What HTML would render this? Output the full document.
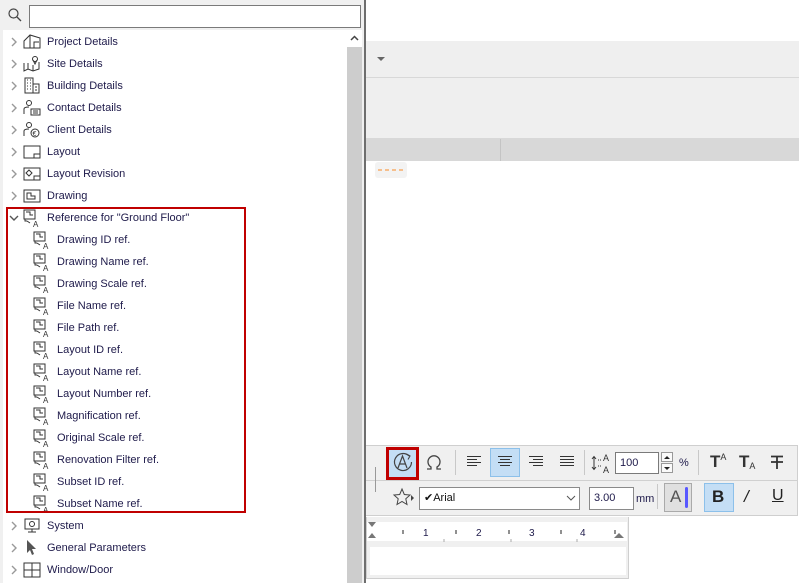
<!DOCTYPE html>
<html><head><meta charset="utf-8"><style>
*{margin:0;padding:0;box-sizing:border-box}
body{width:799px;height:583px;overflow:hidden;background:#fff;font-family:"Liberation Sans",Arial,sans-serif;font-size:11px;color:#1e1a4a;position:relative}
.a{position:absolute}
.row{position:absolute;height:22px;line-height:22px;white-space:nowrap}
svg{position:absolute;overflow:visible}
.tb{position:absolute;background:#f0f0f0}
</style></head><body>
<div class="a" style="left:366px;top:41px;width:433px;height:97px;background:#efefef"></div>
<div class="a" style="left:366px;top:77px;width:433px;height:1px;background:#d8d8d8"></div>
<div class="a" style="left:366px;top:138px;width:433px;height:23px;background:#d8d8d8"></div>
<div class="a" style="left:500px;top:139px;width:1px;height:22px;background:#c4c4c4"></div>
<svg style="left:377px;top:57px" width="8" height="5"><path d="M0 0H8L4 4Z" fill="#666"/></svg>
<div class="a" style="left:375px;top:162px;width:32px;height:16px;background:#f3f3f3;border-radius:3px"></div>
<svg style="left:378px;top:169px" width="28" height="3"><path d="M0 1H27" stroke="#f8a050" stroke-width="1.2" stroke-dasharray="4 3"/></svg>

<div class="a" style="left:0;top:0;width:365px;height:583px;background:#fff"></div>
<div class="a" style="left:0;top:0;width:365px;height:30px;background:#f0f0f0"></div>
<svg style="left:8px;top:8px" width="14" height="14"><circle cx="5.5" cy="5.5" r="4.5" fill="none" stroke="#444" stroke-width="1.2"/><path d="M9 9L13 13" stroke="#444" stroke-width="1.3"/></svg>
<div class="a" style="left:29px;top:5px;width:332px;height:23px;background:#fff;border:1px solid #7a7a7a"></div>
<div class="a" style="left:0;top:30px;width:3px;height:553px;background:#f0f0f0"></div>
<div class="a" style="left:347px;top:47px;width:15px;height:536px;background:#cdcdcd"></div>
<svg style="left:350px;top:35px" width="9" height="6"><path d="M1 5L4.5 1.5L8 5" fill="none" stroke="#444" stroke-width="1.5"/></svg>
<div class="a" style="left:362px;top:0;width:3px;height:583px;background:#f0f0f0"></div>
<div class="a" style="left:364px;top:0;width:2px;height:583px;background:#6e6e6e"></div>

<div id="tree"></div>

<div class="a" style="left:6px;top:207px;width:240px;height:306px;border:2.5px solid #c00000"></div>

<div class="tb" style="left:366px;top:445px;width:432px;height:71px;border-top:1px solid #cfcfcf;border-right:1px solid #cfcfcf;border-bottom:1px solid #cfcfcf"></div>
<div class="a" style="left:366px;top:480px;width:432px;height:1px;background:#d0d0d0"></div>
<div class="a" style="left:375px;top:467px;width:1px;height:25px;background:#999"></div>
<div class="a" style="left:386px;top:447px;width:33px;height:33px;background:#c4def5;border:3px solid #c00000"></div>
<svg style="left:392px;top:451px" width="22" height="22"><path d="M17 5A8.5 8.5 0 1 0 19.5 11" fill="none" stroke="#444" stroke-width="1.2"/><path d="M14.5 3L18 5L16 8.5" fill="none" stroke="#444" stroke-width="1.1"/><path d="M6 17L10.5 5L15 17M7.5 13H13.5" fill="none" stroke="#444" stroke-width="1.2"/></svg>
<svg style="left:425px;top:455px" width="18" height="16"><path d="M2 14H6V12A6 6 0 1 1 12 12V14H16" fill="none" stroke="#444" stroke-width="1.3"/></svg>
<div class="a" style="left:455px;top:450px;width:1px;height:25px;background:#c8c8c8"></div>
<div class="a" style="left:490px;top:448px;width:30px;height:29px;background:#c4def5;border:1px solid #8cc0ea"></div>
<svg style="left:467px;top:456px" width="110" height="12">
<g stroke="#333" stroke-width="1"><path d="M0 .5H14M0 3.5H10M0 6.5H14M0 9.5H10"/>
<path d="M31 .5H45M33 3.5H43M31 6.5H45M33 9.5H43"/>
<path d="M62 .5H76M66 3.5H76M62 6.5H76M66 9.5H76"/>
<path d="M93 .5H107M93 3.5H107M93 6.5H107M93 9.5H107"/></g></svg>
<div class="a" style="left:584px;top:450px;width:1px;height:25px;background:#c8c8c8"></div>
<svg style="left:590px;top:451px" width="24" height="24"><path d="M4 6V18M2 8L4 5.5L6 8M2 16L4 18.5L6 16" fill="none" stroke="#333"/><path d="M8 9H12M8 15H12" stroke="#333" stroke-dasharray="1 1"/><text x="13" y="10" font-size="9" fill="#333" font-family="Liberation Sans">A</text><text x="13" y="22" font-size="9" fill="#333" font-family="Liberation Sans">A</text></svg>
<div class="a" style="left:615px;top:452px;width:44px;height:22px;background:#fff;border:1px solid #7a7a7a;padding-left:4px;line-height:20px;font-size:11px">100</div>
<div class="a" style="left:661px;top:452px;width:12px;height:10px;border:1px solid #999;background:#fafafa"></div>
<div class="a" style="left:661px;top:463px;width:12px;height:10px;border:1px solid #999;background:#fafafa"></div>
<svg style="left:663px;top:454px" width="8" height="18"><path d="M1 5L4 2L7 5ZM1 13L4 16L7 13Z" fill="#222"/></svg>
<div class="a" style="left:679px;top:457px;font-size:11px">%</div>
<div class="a" style="left:698px;top:450px;width:1px;height:25px;background:#c8c8c8"></div>
<div class="a" style="left:710px;top:452px;font-size:17px;color:#333;font-weight:bold">T<span style="font-size:9px;vertical-align:7px;font-weight:normal">A</span></div>
<div class="a" style="left:739px;top:452px;font-size:17px;color:#333;font-weight:bold">T<span style="font-size:9px;vertical-align:-2px;font-weight:normal">A</span></div>
<svg style="left:770px;top:455px" width="14" height="15"><path d="M1 1.5H13M7 1.5V14M1 7H13" stroke="#333" stroke-width="1.8"/></svg>

<svg style="left:393px;top:488px" width="22" height="20"><path d="M9 1L11.3 6.5L17 7L12.8 10.8L14 16.5L9 13.5L4 16.5L5.2 10.8L1 7L6.7 6.5Z" fill="none" stroke="#444"/><path d="M18 7L21 10L18 13Z" fill="#444"/></svg>
<div class="a" style="left:419px;top:487px;width:161px;height:23px;background:#fff;border:1px solid #8a8a8a;line-height:21px;padding-left:4px;font-size:11px;color:#111">✔Arial</div>
<svg style="left:566px;top:495px" width="10" height="6"><path d="M1 1L5 5L9 1" fill="none" stroke="#555"/></svg>
<div class="a" style="left:589px;top:487px;width:45px;height:23px;background:#fff;border:1px solid #8a8a8a;line-height:21px;padding-left:4px">3.00</div>
<div class="a" style="left:636px;top:493px">mm</div>
<div class="a" style="left:657px;top:484px;width:1px;height:25px;background:#c8c8c8"></div>
<div class="a" style="left:664px;top:483px;width:28px;height:29px;background:#e0e0e0;border:1px solid #aaa"></div>
<div class="a" style="left:670px;top:487px;font-size:17px;color:#555">A</div>
<div class="a" style="left:685px;top:487px;width:3px;height:21px;background:#5858ff;border-radius:2px"></div>
<div class="a" style="left:704px;top:483px;width:30px;height:29px;background:#c4def5;border:1px solid #8cc0ea"></div>
<div class="a" style="left:712px;top:487px;font-size:17px;font-weight:bold;color:#222">B</div>
<div class="a" style="left:744px;top:487px;font-size:17px;font-style:italic;color:#222">/</div>
<div class="a" style="left:772px;top:487px;font-size:16px;color:#222;text-decoration:underline">U</div>

<div class="a" style="left:366px;top:517px;width:263px;height:62px;background:#f0f0f0;border:1px solid #cfcfcf;border-top:none"></div>
<div class="a" style="left:367px;top:522px;width:260px;height:19px;background:#fff"></div>
<div class="a" style="left:370px;top:547px;width:256px;height:28px;background:#fff"></div>
<svg style="left:366px;top:520px" width="262" height="30" font-family="Liberation Sans" font-size="10" fill="#1e1a4a">
<path d="M2 2H10L6 7ZM2 18H10L6 13Z" fill="#777"/><path d="M248 18H258L253 13Z" fill="#777"/>
<g stroke="#222"><path d="M37 10V14M90 10V14M143 10V14M195 10V14M249 10V14"/></g>
<g stroke="#aaa"><path d="M78 19V22M145 19V22M211 19V22"/></g>
<text x="57" y="16">1</text><text x="110" y="16">2</text><text x="163" y="16">3</text><text x="214" y="16">4</text>
</svg>

<script>
var items=[
["Project Details",0,'<path d="M1 8L7 2L17 5V15H1Z M7 2V15 M11 15V9H16" fill="none" stroke="#333"/>'],
["Site Details",0,'<path d="M1 8V16L5 14L10 16L16 14V7 M5 8V14 M10 10V16" fill="none" stroke="#333"/><circle cx="12" cy="4" r="2.5" fill="none" stroke="#333"/><path d="M10 5L12 9L14 5" fill="none" stroke="#333"/>'],
["Building Details",0,'<path d="M2 1H10V16H2Z M10 7H16V16H10Z" fill="none" stroke="#333"/><path d="M4 3H5M7 3H8M4 6H5M7 6H8M4 9H5M7 9H8M4 12H5M7 12H8M12 10H14M12 13H14" stroke="#333"/>'],
["Contact Details",0,'<circle cx="6" cy="4" r="2.5" fill="none" stroke="#333"/><path d="M1 15V10Q1 8 6 8 M8 10H17V16H8Z M10 12H15M10 14H15" fill="none" stroke="#333"/>'],
["Client Details",0,'<circle cx="6" cy="4" r="2.5" fill="none" stroke="#333"/><path d="M1 15V10Q1 8 6 8" fill="none" stroke="#333"/><circle cx="12" cy="12" r="4" fill="none" stroke="#333"/><text x="9.5" y="15" font-size="7" fill="#333">€</text>'],
["Layout",0,'<path d="M1 3H17V15H1Z M11 15V11H17" fill="none" stroke="#333"/>'],
["Layout Revision",0,'<path d="M1 3H17V15H1Z M11 15V11H17" fill="none" stroke="#333"/><path d="M3 8L6 5L9 8L6 11Z" fill="none" stroke="#333"/>'],
["Drawing",0,'<path d="M1 3H17V15H1Z M4 6H8V9H12V12H4Z" fill="none" stroke="#333"/>'],
['Reference for "Ground Floor"',0,'',1],
["Drawing ID ref.",1],["Drawing Name ref.",1],["Drawing Scale ref.",1],["File Name ref.",1],["File Path ref.",1],["Layout ID ref.",1],["Layout Name ref.",1],["Layout Number ref.",1],["Magnification ref.",1],["Original Scale ref.",1],["Renovation Filter ref.",1],["Subset ID ref.",1],["Subset Name ref.",1],
["System",0,'<path d="M2 2H16V12H2Z M9 12V15M5 15H13" fill="none" stroke="#333"/><circle cx="9" cy="7" r="2.5" fill="none" stroke="#333"/>'],
["General Parameters",0,'<path d="M4 1L4 14L7 11L9 16L11 15L9 10L13 10Z" fill="#555"/>'],
["Window/Door",0,'<path d="M1 2H17V16H1Z M9 2V16 M1 9H17" fill="none" stroke="#333"/>']
];
var ref='<path d="M1 1H12V10H1Z M3 3H7V6H10" fill="none" stroke="#333"/><path d="M2 10V12H4 M4 12L7 14" fill="none" stroke="#333"/><text x="10" y="18" font-size="8" fill="#333" font-family="Liberation Sans">A</text>';
var h='';
items.forEach(function(it,i){
 var y=31+22*i;var child=it[1]==1&&it.length==2;
 var ix=child?33:23, tx=child?57:47;
 h+='<div class="row" style="top:'+y+'px;left:0;width:347px">';
 if(!child){
  if(it[3]) h+='<svg style="left:9px;top:8px" width="10" height="7"><path d="M1 1L5 5L9 1" fill="none" stroke="#555" stroke-width="1.4"/></svg>';
  else h+='<svg style="left:11px;top:6px" width="7" height="10"><path d="M1 1L5 5L1 9" fill="none" stroke="#999" stroke-width="1.4"/></svg>';
 }
 var ic=(child||it[3])?ref:it[2];
 h+='<svg style="left:'+ix+'px;top:2px" width="18" height="18">'+ic+'</svg>';
 h+='<span style="position:absolute;left:'+tx+'px">'+it[0]+'</span></div>';
});
document.getElementById('tree').innerHTML=h;
</script>
</body></html>
